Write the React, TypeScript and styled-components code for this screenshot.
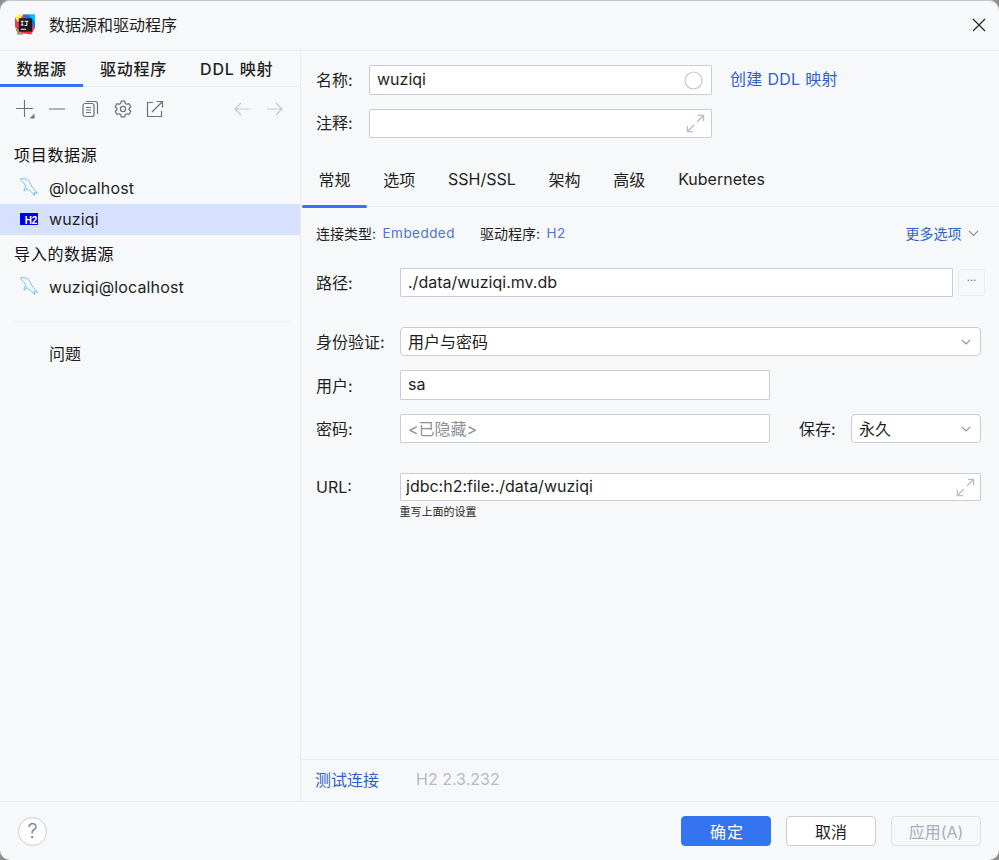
import React from "react";
import styled, { createGlobalStyle } from "styled-components";

const Global = createGlobalStyle`
  html, body { margin: 0; padding: 0; background: #8f8f8f; }
  #root { width: 999px; height: 860px; }
  * { box-sizing: border-box; }
`;

const Win = styled.div`
  width: 999px; height: 860px; display: flex; flex-direction: column;
  background: #f7f8fa; border-radius: 10px; overflow: hidden; box-shadow: inset 0 1px 0 #c6c6c6;
  font-family: Inter, "Noto Sans CJK SC", sans-serif; font-size: 16px; color: #1e1f22;
`;
const TitleBar = styled.header`
  height: 51px; flex: none; display: flex; align-items: center; padding: 0 13px 1px 15px;
  border-bottom: 1px solid #ebecf0;
`;
const Title = styled.div` margin: 0 0 2px 14px; flex: 1; `;
const Body = styled.div` flex: 1; min-height: 0; display: flex; `;
const Side = styled.aside`
  width: 301px; flex: none; border-right: 1px solid #ebecf0; display: flex; flex-direction: column;
`;
const SideTabs = styled.div`
  height: 36px; flex: none; display: flex; border-bottom: 1px solid #ebecf0;
`;
const SideTab = styled.div<{ $on?: boolean }>`
  height: 36px; padding: 0 16.5px; display: flex; align-items: center;
  letter-spacing: 0.8px; font-weight: 500;
  border-bottom: 3px solid ${p => (p.$on ? "#3574f0" : "transparent")};
`;
const Tools = styled.div`
  height: 24px; margin-top: 10px; padding: 0 9px 0 11px; display: flex; align-items: center; flex: none;
`;
const ToolBtn = styled.span<{ $w?: number }>`
  width: ${p => p.$w ?? 32.5}px; display: flex; justify-content: center; position: relative; flex: none;
`;
const Spacer = styled.div` flex: 1; `;
const GroupHead = styled.div<{ $top: number }>`
  margin-top: ${p => p.$top}px; height: 22px; padding: 0 0 1px 14px; display: flex; align-items: center;
  letter-spacing: 0.7px; font-weight: 400; flex: none; color: #111;
`;
const TreeRow = styled.div<{ $on?: boolean; $top?: number }>`
  height: 31px; flex: none; display: flex; align-items: center; padding: 0 0 2px 20px; gap: 11px;
  margin-top: ${p => p.$top ?? 0}px; font-size: 16px; letter-spacing: 0.13px; background: ${p => (p.$on ? "#d5e1ff" : "transparent")};
`;
const H2Badge = styled.span`
  width: 18px; height: 12px; background: #0000e6; color: #fff; font: bold 10px/10px "Liberation Sans", sans-serif;
  letter-spacing: -0.3px; text-align: right; padding-right: 1px; padding-top: 3px; flex: none; display: block;
`;
const Rule = styled.div` height: 1px; margin: 18px 10px 0 14px; background: #eff0f3; flex: none; `;
const Problems = styled.div` margin-top: 21px; padding-left: 49px; height: 24px; line-height: 23px; flex: none; `;

const Main = styled.main` flex: 1; min-width: 0; display: flex; flex-direction: column; `;
const HeadRow = styled.div<{ $top: number }>`
  margin-top: ${p => p.$top}px; padding-left: 15px; display: flex; align-items: center; flex: none;
`;
const HeadLabel = styled.label` width: 53px; flex: none; padding-bottom: 3px; `;
const Label = styled.label` padding-bottom: 1px; `;
const Field = styled.div<{ $w?: number; $h?: number; $muted?: boolean; $round?: boolean; $pad?: number; $padR?: number }>`
  ${p => (p.$w ? `width:${p.$w}px; flex:none;` : "flex:1; min-width:0;")}
  height: ${p => p.$h ?? 29}px; background: #fff; border: 1px solid #c9ccd6;
  border-radius: ${p => (p.$round ? 4 : 1)}px; display: flex; align-items: center;
  padding: 0 ${p => p.$padR ?? 5}px 0 ${p => p.$pad ?? 7}px; justify-content: space-between;
  color: ${p => (p.$muted ? "#8c8f96" : "#1e1f22")}; white-space: nowrap;
`;
const FieldText = styled.span` padding-bottom: 2px; `;
const Link = styled.a<{ $soft?: boolean }>`
  color: ${p => (p.$soft ? "#4f74cc" : "#2f62c9")}; text-decoration: none;
`;
const CreateLink = styled(Link)` margin-left: 18px; letter-spacing: 0.3px; padding-bottom: 5px; `;
const Tabs = styled.nav`
  margin-top: 17px; height: 52px; flex: none; padding-left: 1px; display: flex;
  border-bottom: 1px solid #ebecf0;
`;
const Tab = styled.div<{ $on?: boolean }>`
  padding: 0 16.4px 4px; height: 52px; display: flex; align-items: center; position: relative;
  &::after { content: ""; display: ${p => (p.$on ? "block" : "none")}; position: absolute; left: 0; right: 0; bottom: -1px;
    height: 3px; background: #3574f0; border-radius: 2px; }
`;
const Info = styled.div`
  margin-top: 16px; height: 20px; padding: 0 20px 0 15px; display: flex; align-items: center; font-size: 14px; flex: none;
`;
const InfoVal = styled(Link)` margin-left: 6.5px; letter-spacing: 0.45px; font-size: 13.5px; `;
const InfoLabelNext = styled.span` margin-left: 25px; `;
const MoreWrap = styled.div` margin-left: auto; display: flex; align-items: center; gap: 6.5px; `;
const Row = styled.div<{ $top: number }>`
  margin-top: ${p => p.$top}px; padding: 0 18px 0 15px; display: grid;
  grid-template-columns: 84px 1fr; align-items: center; flex: none;
`;
const RowBody = styled.div` display: flex; align-items: center; min-width: 0; `;
const DotsBtn = styled.span`
  width: 27px; height: 27px; margin-left: 5px; margin-right: -4px; flex: none; border: 1px solid #ebecf0; border-radius: 3px;
  display: flex; align-items: center; justify-content: center; color: #6c707e; font-size: 11px; line-height: 1; padding-bottom: 5px;
`;
const SaveLabel = styled.span` margin-left: 29px; width: 52px; flex: none; padding-bottom: 1px; `;
const Hint = styled.div`
  margin: 5px 0 0 98.5px; font-size: 11px; line-height: 12px; flex: none;
`;
const Status = styled.div`
  height: 42px; flex: none; margin-top: auto; border-top: 1px solid #ebecf0; padding: 0 0 3px 14px; display: flex; align-items: center; gap: 37px;
`;
const Version = styled.span` color: #b4b8c2; `;
const Footer = styled.footer`
  height: 59px; flex: none; border-top: 1px solid #ebecf0; display: flex; align-items: center; padding: 0 18px 0 18px; gap: 15px;
`;
const Help = styled.span`
  width: 29px; height: 29px; border-radius: 50%; border: 1px solid #c9ccd6; background: #fff; color: #7a7e8a;
  display: flex; align-items: center; justify-content: center; margin-right: auto; font-size: 20px; font-weight: 300;
`;
const Btn = styled.button<{ $kind?: "primary" | "disabled" }>`
  width: 90px; height: 30px; font: inherit; font-size: 16px; border-radius: 4px; padding: ${p => (p.$kind === "primary" ? "0 0 0 2px" : "0")};
  background: ${p => (p.$kind === "primary" ? "#3574f0" : p.$kind === "disabled" ? "#f7f8fa" : "#fff")};
  color: ${p => (p.$kind === "primary" ? "#fff" : p.$kind === "disabled" ? "#a8adbd" : "#1e1f22")};
  border: 1px solid ${p => (p.$kind === "primary" ? "#3574f0" : p.$kind === "disabled" ? "#dfe1e5" : "#c9ccd6")};
  letter-spacing: ${p => (p.$kind === "primary" ? "1px" : "0")};
`;

const G = "#6c707e";
const Plus = () => (<svg width="20" height="22" viewBox="0 0 20 22"><path d="M9.500 2v17M1 10.500h17" stroke={G} strokeWidth="1.1" fill="none"/><path d="M14.500 20.500h5v-5z" fill={G}/></svg>);
const Minus = () => (<svg width="18" height="16" viewBox="0 0 18 16"><path d="M1 8h16" stroke={G} strokeWidth="1.1"/></svg>);
const Copy = () => (<svg width="18" height="18" viewBox="0 0 18 18" fill="none" stroke={G} strokeWidth="1.2"><rect x="2" y="3.500" width="11" height="13" rx="2"/><path d="M5 1.500h9a2.500 2.500 0 0 1 2.500 2.500v10"/><path d="M5 7.500h5M5 10h5M5 12.500h5"/></svg>);
const Gear = () => (<svg width="18" height="18" viewBox="0 0 18 18" fill="none" stroke={G} strokeWidth="1.2"><path d="M7.200 1.200h3.600l.5 2.200 1.500.9 2.200-.7 1.800 3.100-1.700 1.500v1.600l1.700 1.500-1.800 3.100-2.200-.7-1.500.9-.5 2.200H7.200l-.5-2.200-1.500-.9-2.200.7-1.800-3.100 1.700-1.500V8.200L1.200 6.700 3 3.600l2.200.7 1.500-.9z" strokeLinejoin="round"/><circle cx="9" cy="9" r="2.600"/></svg>);
const Ext = () => (<svg width="18" height="18" viewBox="0 0 18 18" fill="none" stroke={G} strokeWidth="1.2"><path d="M7 2.500H1.500v14h14V11"/><path d="M6 12L16.500 1.500M10.500 1.500h6v6"/></svg>);
const Arrow = ({ right }: { right?: boolean }) => (<svg width="18" height="14" viewBox="0 0 18 14" fill="none" stroke="#c4c7d0" strokeWidth="1.2" style={right ? { transform: "scaleX(-1)" } : undefined}><path d="M2 7h15M8 1L2 7l6 6"/></svg>);
const Close = () => (<svg width="14" height="14" viewBox="0 0 14 14" stroke="#1e1f22" strokeWidth="1.1"><path d="M1 1l12 12M13 1L1 13"/></svg>);
const Chevron = ({ w = 10 }: { w?: number }) => (<svg width={w} height={w * 0.6} viewBox="0 0 12 7.200" fill="none" stroke="#8a8e99" strokeWidth="1.3"><path d="M1 1l5 5 5-5"/></svg>);
const Expand = () => (<svg width="19" height="19" viewBox="0 0 20 20" fill="none" stroke="#b9bdc9" strokeWidth="1.4"><path d="M11.500 8.500L18.500 1.500M12.500 1.500h6v6M8.500 11.500L1.500 18.500M7.500 18.500h-6v-6"/></svg>);
const Ring = () => (<svg width="19" height="19" viewBox="0 0 19 19" fill="none" stroke="#c3c7cf" strokeWidth="1.2"><circle cx="9.500" cy="9.500" r="8.500"/></svg>);
const Dolphin = () => (<svg width="18" height="19" viewBox="0 0 18 19" fill="#f2f8fd" stroke="#6db7e4" strokeWidth="0.9"><path d="M.5.800C3.500 0 7.500 1 9.300 3.400c1.300 1.800 1.500 3.800 2.900 5.600 1.300 1.700 3.300 3.700 5.300 6.500-1.200-.3-2.300-.7-3.200-1.200.2 1.200.3 2.300.2 3.400-1-1.200-1.800-2.400-3-3.600-1.600-1.500-4.200-2.300-5.500-4.400-.9-1.600-.8-3.200-1.700-4.300C2.900 4.800 1.500 3 .5.800z" strokeLinejoin="round"/><path d="M4.500 9.500l-.5 3.500 3-1.500" fill="none"/></svg>);
const Logo = () => (
  <svg width="20" height="21" viewBox="0 0 21 21">
    <path d="M0 4L8 0l13 1v13l-4 7-8-1L3 21 0 12z" fill="#fe315d"/>
    <path d="M8 0l13 0v13l-6-3z" fill="#087cfa"/>
    <path d="M14 0h7v8zM0 12l3 9h6z" fill="#07c3f2"/>
    <path d="M0 3l4-3h5L3 8z" fill="#fcf84a"/>
    <path d="M0 12l4 9h4z" fill="#fc801d"/>
    <rect x="4" y="4" width="14" height="14" fill="#1a1a1d"/>
    <path d="M6 15h5.500v1H6z" fill="#fff"/>
    <path d="M6 6.500h3v1H8v3h1v1H6v-1h1v-3H6zM10 6.500h4v1h-1v3.500q0 1-1 1h-2v-1h2v-3.500h-2z" fill="#fff"/>
  </svg>
);

export default function App() {
  return (
    <>
      <Global />
      <Win>
        <TitleBar>
          <Logo />
          <Title>数据源和驱动程序</Title>
          <Close />
        </TitleBar>
        <Body>
          <Side>
            <SideTabs>
              <SideTab $on>数据源</SideTab>
              <SideTab>驱动程序</SideTab>
              <SideTab>DDL 映射</SideTab>
            </SideTabs>
            <Tools>
              <ToolBtn $w={28}><Plus /></ToolBtn>
              <ToolBtn $w={35}><Minus /></ToolBtn>
              <ToolBtn><Copy /></ToolBtn>
              <ToolBtn><Gear /></ToolBtn>
              <ToolBtn><Ext /></ToolBtn>
              <Spacer />
              <ToolBtn><Arrow /></ToolBtn>
              <ToolBtn><Arrow right /></ToolBtn>
            </Tools>
            <GroupHead $top={22}>项目数据源</GroupHead>
            <TreeRow $top={8}><Dolphin />@localhost</TreeRow>
            <TreeRow $on><H2Badge>H2</H2Badge>wuziqi</TreeRow>
            <GroupHead $top={7}>导入的数据源</GroupHead>
            <TreeRow $top={8}><Dolphin />wuziqi@localhost</TreeRow>
            <Rule />
            <Problems>问题</Problems>
          </Side>
          <Main>
            <HeadRow $top={14}>
              <HeadLabel>名称:</HeadLabel>
              <Field $w={343} $h={30} $padR={8}><FieldText>wuziqi</FieldText><Ring /></Field>
              <CreateLink>创建 DDL 映射</CreateLink>
            </HeadRow>
            <HeadRow $top={14}>
              <HeadLabel>注释:</HeadLabel>
              <Field $w={343} $padR={6}><span /><Expand /></Field>
            </HeadRow>
            <Tabs>
              <Tab $on>常规</Tab>
              <Tab>选项</Tab>
              <Tab>SSH/SSL</Tab>
              <Tab>架构</Tab>
              <Tab>高级</Tab>
              <Tab>Kubernetes</Tab>
            </Tabs>
            <Info>
              <span>连接类型:</span><InfoVal $soft>Embedded</InfoVal>
              <InfoLabelNext>驱动程序:</InfoLabelNext><InfoVal $soft>H2</InfoVal>
              <MoreWrap><Link>更多选项</Link><Chevron w={11} /></MoreWrap>
            </Info>
            <Row $top={25}>
              <Label>路径:</Label>
              <RowBody><Field><FieldText>./data/wuziqi.mv.db</FieldText></Field><DotsBtn>···</DotsBtn></RowBody>
            </Row>
            <Row $top={30}>
              <Label>身份验证:</Label>
              <RowBody><Field $round $padR={9}><FieldText>用户与密码</FieldText><Chevron /></Field></RowBody>
            </Row>
            <Row $top={14}>
              <Label>用户:</Label>
              <RowBody><Field $w={370} $h={30}><FieldText>sa</FieldText></Field></RowBody>
            </Row>
            <Row $top={14}>
              <Label>密码:</Label>
              <RowBody>
                <Field $w={370} $muted><FieldText>&lt;已隐藏&gt;</FieldText></Field>
                <SaveLabel>保存:</SaveLabel>
                <Field $round $padR={9}><FieldText>永久</FieldText><Chevron /></Field>
              </RowBody>
            </Row>
            <Row $top={30}>
              <Label>URL:</Label>
              <RowBody><Field $h={28} $pad={5}><FieldText>jdbc:h2:file:./data/wuziqi</FieldText><Expand /></Field></RowBody>
            </Row>
            <Hint>重写上面的设置</Hint>
            <Status>
              <Link>测试连接</Link>
              <Version>H2 2.3.232</Version>
            </Status>
          </Main>
        </Body>
        <Footer>
          <Help>?</Help>
          <Btn $kind="primary">确定</Btn>
          <Btn>取消</Btn>
          <Btn $kind="disabled">应用(A)</Btn>
        </Footer>
      </Win>
    </>
  );
}
